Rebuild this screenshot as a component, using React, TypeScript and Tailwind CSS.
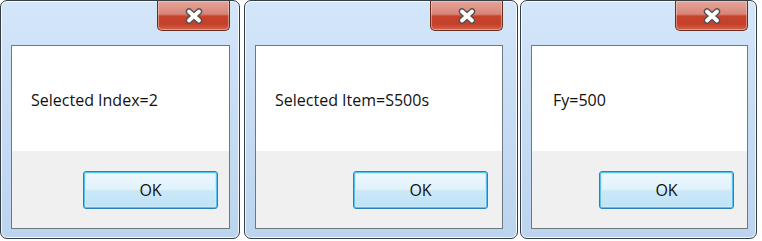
import React from "react";

type WinProps = {
  width: string;
  contentMl: string;
  contentMr: string;
  textPl: string;
  btnMr: string;
  text: string;
};

function CloseX() {
  return (
    <svg width="20" height="16" viewBox="0 0 20 16">
      <g strokeLinecap="round">
        <path d="M5 3.5 L15 12.5 M15 3.5 L5 12.5" stroke="#505050" strokeWidth="6.4" />
        <path d="M5 3.5 L15 12.5 M15 3.5 L5 12.5" stroke="#ffffff" strokeWidth="3.8" />
      </g>
    </svg>
  );
}

function Win({ width, contentMl, contentMr, textPl, btnMr, text }: WinProps) {
  return (
    <div
      className={`${width} h-[239px] shrink-0 flex flex-col rounded-[7px] border border-[#353d46] bg-[linear-gradient(180deg,#d4e6f9_0%,#c9def5_40%,#bcd4ee_100%)] shadow-[inset_0_0_0_1px_rgba(255,255,255,0.8)]`}
    >
      <div className={`h-[44px] shrink-0 flex justify-end ${contentMr}`}>
        <div className="w-[73px] h-[30px] flex items-center justify-center rounded-b-[5px] border border-t-0 border-[#6b2c20] bg-[linear-gradient(180deg,#e4a597_0%,#d8857a_45%,#c6432c_52%,#c4402a_80%,#d4644d_100%)] shadow-[inset_0_0_0_1px_rgba(255,220,210,0.45)]">
          <CloseX />
        </div>
      </div>
      <div
        className={`${contentMl} ${contentMr} h-[184px] shrink-0 flex flex-col border border-[#6f7880] bg-white`}
      >
        <div
          className={`h-[105px] shrink-0 ${textPl} pt-[42px] text-[16px] leading-[24px] text-[#111] font-['Open_Sans',sans-serif]`}
        >
          {text}
        </div>
        <div className={`flex-1 bg-[#f0f0f0] flex justify-end pt-[20px] ${btnMr}`}>
          <div className="w-[135px] h-[38px] flex items-center justify-center rounded-[3px] border border-[#2c7fb8] bg-[linear-gradient(180deg,#eef8fd_0%,#e1f2fb_48%,#cbe8f8_52%,#c0e3f6_100%)] shadow-[inset_0_0_0_1px_#56c3ee,inset_0_0_0_2px_#c6ecfb] text-[16px] text-[#111] font-['Open_Sans',sans-serif]">
            OK
          </div>
        </div>
      </div>
    </div>
  );
}

export default function App() {
  return (
    <div className="w-[762px] h-[241px] bg-white flex items-start overflow-hidden">
      <Win
        width="w-[240px]"
        contentMl="ml-[10px]"
        contentMr="mr-[9px]"
        textPl="pl-[19px]"
        btnMr="pr-[11px]"
        text="Selected Index=2"
      />
      <div className="w-[4px] shrink-0" />
      <Win
        width="w-[274px]"
        contentMl="ml-[10px]"
        contentMr="mr-[14px]"
        textPl="pl-[19px]"
        btnMr="pr-[14px]"
        text="Selected Item=S500s"
      />
      <div className="w-[2px] shrink-0" />
      <Win
        width="w-[237px]"
        contentMl="ml-[10px]"
        contentMr="mr-[8px]"
        textPl="pl-[21px]"
        btnMr="pr-[13px]"
        text="Fy=500"
      />
    </div>
  );
}
